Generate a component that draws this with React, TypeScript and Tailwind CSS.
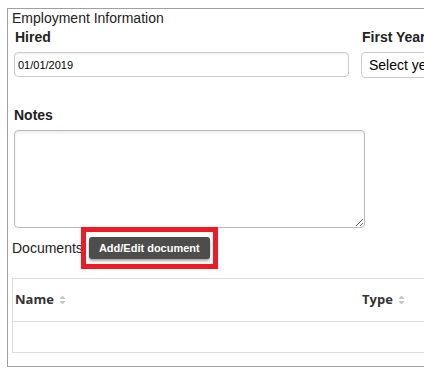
import React from "react";

const arial = { fontFamily: '"Liberation Sans", Arial, sans-serif' };

function SortIcon() {
  return (
    <svg width="7" height="10" viewBox="0 0 7 10" className="ml-[5px] inline-block">
      <path d="M3.5 0.5 L6.5 4 L0.5 4 Z" fill="#c4c4c4" />
      <path d="M0.5 6 L6.5 6 L3.5 9.5 Z" fill="#c4c4c4" />
    </svg>
  );
}

export default function App() {
  return (
    <div
      className="w-[424px] h-[375px] overflow-hidden bg-white pl-[7px] pt-[8px] text-[#222]"
      style={arial}
    >
      <div className="w-[700px] border border-r-0 border-[#a0a0a0] pl-[4px] pt-[1px] pb-[13px]">
        <div className="text-[14px] leading-[16px]">Employment Information</div>

        {/* Hired / First year */}
        <div className="mt-[3px] flex gap-[12px] pl-[2px]">
          <div className="w-[335px]">
            <div className="pl-[1px] text-[14px] font-bold leading-[16px]">Hired</div>
            <input
              defaultValue="01/01/2019"
              className="mt-[7px] block h-[25px] w-[335px] rounded-[4px] border border-[#ccc] bg-white pl-[3px] text-[11px] text-black shadow-[inset_0_1px_2px_rgba(0,0,0,0.08)] outline-none"
              style={arial}
            />
          </div>
          <div className="w-[200px]">
            <div className="pl-[1px] text-[14px] font-bold leading-[16px] whitespace-nowrap">
              First Year in Industry
            </div>
            <div className="mt-[7px] flex h-[26px] w-[200px] items-center rounded-[4px] border border-[#ccc] bg-white pl-[7px] text-[14px] text-black">
              Select year
            </div>
          </div>
        </div>

        {/* Notes */}
        <div className="mt-[29px] pl-[2px]">
          <div className="text-[14px] font-bold leading-[16px]">Notes</div>
          <textarea
            className="mt-[7px] block h-[98px] w-[351px] rounded-[4px] border border-[#bbb] bg-white shadow-[inset_0_2px_3px_rgba(0,0,0,0.07)] outline-none"
          />
        </div>

        {/* Documents */}
        <div className="mt-[9px] flex items-center">
          <span className="text-[14px] leading-[16px]">Documents</span>
          <div className="relative ml-[6px]">
            <span className="pointer-events-none absolute -inset-x-[8px] -inset-y-[10px] border-[5px] border-[#ed1c24]" />
            <button
              className="flex h-[22px] w-[121px] items-center justify-center rounded-[3px] bg-[#4d4d4b] text-[11px] font-bold text-white shadow-[0_2px_3px_rgba(0,0,0,0.35)]"
              style={arial}
            >
              Add/Edit document
            </button>
          </div>
        </div>

        {/* Table */}
        <div
          className="mt-[19px] w-[680px] border border-[#ddd] text-[13px] font-bold text-[#333]"
          style={{ fontFamily: '"Open Sans", sans-serif' }}
        >
          <div className="flex h-[43px] items-center border-b border-[#ddd]">
            <div className="flex w-[347px] items-center pl-[2px]">
              Name
              <SortIcon />
            </div>
            <div className="flex items-center pl-[2px]">
              Type
              <SortIcon />
            </div>
          </div>
          <div className="h-[30px]" />
        </div>
      </div>
    </div>
  );
}
